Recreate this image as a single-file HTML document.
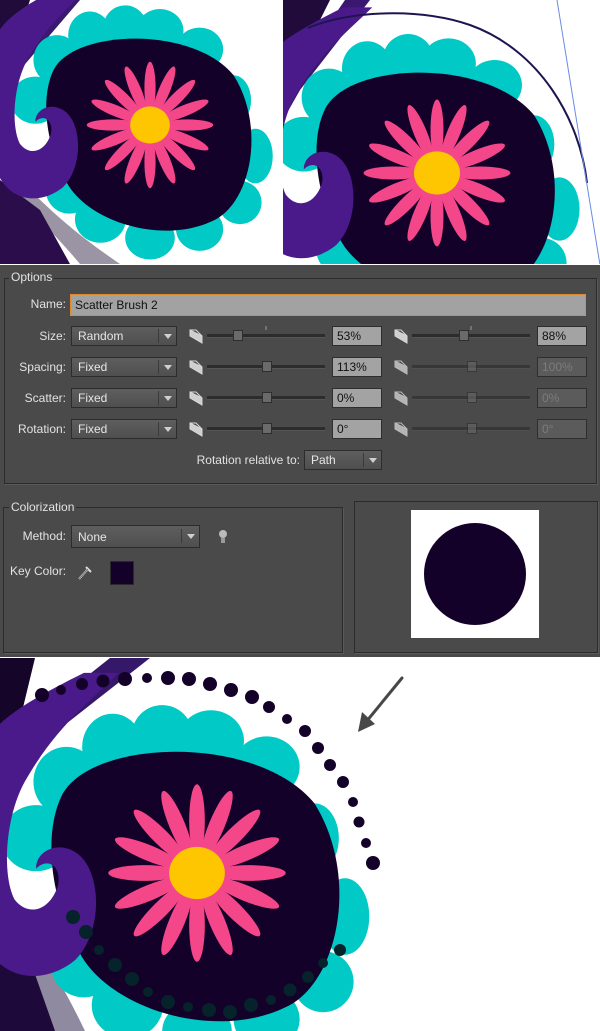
<!DOCTYPE html>
<html><head><meta charset="utf-8"><style>
body{margin:0;width:600px;height:1031px;overflow:hidden;background:#fff;font-family:"Liberation Sans",sans-serif;position:relative}
.a{position:absolute}
#panel{left:0;top:265px;width:600px;height:392px;background:#4a4a4a}
.lbl{position:absolute;color:#e2e2e2;font-size:12px;text-align:right;width:66px;left:0}
.dd{position:absolute;height:20px;background:linear-gradient(#5e5e5e,#4f4f4f);border:1px solid #2c2c2c;color:#e6e6e6;font-size:12px;line-height:19px;box-sizing:border-box;padding-left:6px}
.dd .ar{position:absolute;right:0;top:2px;width:17px;height:14px;border-left:1px solid #3a3a3a}
.dd .ar:after{content:"";position:absolute;left:5px;top:5px;border-left:4px solid transparent;border-right:4px solid transparent;border-top:5px solid #cfcfcf}
.box{position:absolute;height:20px;box-sizing:border-box;border:1px solid #2e2e2e;font-size:12px;line-height:19px;padding-left:4px;width:50px}
.on{background:#a3a3a3;color:#111}
.off{background:#5b5b5b;color:#7c7c7c}
.trk{position:absolute;height:3px;background:#2c2c2c;border-bottom:1px solid #555}
.th{position:absolute;width:8px;height:9px;background:#6a6a6a;border:1px solid #2e2e2e}
.fs{position:absolute;border:1px solid #2b2b2b;box-shadow:1px 1px 0 #5a5a5a}
.leg{position:absolute;background:#4a4a4a;color:#e2e2e2;font-size:12px;padding:0 2px}
</style></head><body>
<svg class="a" style="left:0;top:0" width="600" height="1031" viewBox="0 0 600 1031">
<defs>
<g id="fl">
<path d="M-1.55,-0.9 C-1.2,-1.55 0.7,-1.6 1.35,-0.8 C1.85,0 1.65,1.15 1.1,1.5 C0.3,1.95 -0.9,1.6 -1.3,1.0 C-1.65,0.45 -1.8,-0.4 -1.55,-0.9Z" fill="#14012a"/>
<g id="pt"><ellipse cx="0" cy="-0.6" rx="0.09" ry="0.42" fill="#f4478a"/></g>
<use href="#pt" transform="rotate(22.5)"/><use href="#pt" transform="rotate(45)"/><use href="#pt" transform="rotate(67.5)"/><use href="#pt" transform="rotate(90)"/><use href="#pt" transform="rotate(112.5)"/><use href="#pt" transform="rotate(135)"/><use href="#pt" transform="rotate(157.5)"/><use href="#pt" transform="rotate(180)"/><use href="#pt" transform="rotate(202.5)"/><use href="#pt" transform="rotate(225)"/><use href="#pt" transform="rotate(247.5)"/><use href="#pt" transform="rotate(270)"/><use href="#pt" transform="rotate(292.5)"/><use href="#pt" transform="rotate(315)"/><use href="#pt" transform="rotate(337.5)"/>
<ellipse cx="0" cy="0" rx="0.32" ry="0.3" fill="#fec600"/>
</g>
<g id="sc" fill="#00c9c6">
<ellipse cx="-1.5" cy="-1.05" rx="0.38" ry="0.4"/><ellipse cx="-0.97" cy="-1.45" rx="0.35" ry="0.38"/><ellipse cx="-0.4" cy="-1.58" rx="0.35" ry="0.35"/><ellipse cx="0.16" cy="-1.52" rx="0.38" ry="0.35"/><ellipse cx="0.8" cy="-1.22" rx="0.38" ry="0.35"/><ellipse cx="1.35" cy="-0.4" rx="0.28" ry="0.4"/>
<ellipse cx="1.7" cy="0.5" rx="0.28" ry="0.44"/><ellipse cx="1.45" cy="1.25" rx="0.35" ry="0.35"/><ellipse cx="0.8" cy="1.68" rx="0.38" ry="0.35"/><ellipse cx="0" cy="1.82" rx="0.4" ry="0.35"/><ellipse cx="-0.8" cy="1.52" rx="0.41" ry="0.38"/><ellipse cx="-1.3" cy="1.05" rx="0.38" ry="0.38"/><ellipse cx="-1.85" cy="-0.4" rx="0.4" ry="0.38"/>
</g>
<g id="sw">
<path d="M-2.45,-1.5 L-2.45,0.8 C-2.2,1.3 -1.7,1.25 -1.4,1.0 C-1.1,0.7 -1.1,0.1 -1.3,-0.15 C-1.5,-0.4 -1.85,-0.3 -1.85,-0.05 C-1.7,-0.2 -1.55,-0.05 -1.6,0.15 C-1.7,0.45 -1.95,0.5 -2.1,0.3 C-2.25,0 -2.2,-0.7 -1.95,-1.1 C-1.6,-1.7 -1.2,-2.0 -0.9,-2.3 L-1.3,-2.3 C-1.9,-2.0 -2.25,-1.8 -2.45,-1.5Z" fill="#4a1a8a"/>
</g>
<clipPath id="c1"><rect x="0" y="0" width="280" height="264"/></clipPath>
<clipPath id="c2"><rect x="283" y="0" width="317" height="264"/></clipPath>
<clipPath id="c3"><rect x="0" y="658" width="600" height="373"/></clipPath>
</defs>
<g clip-path="url(#c1)">
<rect width="280" height="264" fill="#fff"/>
<path d="M0,0 L30,0 L10,60 L0,90Z" fill="#200b3a"/>
<path d="M60,0 L80,0 L20,70 L0,100 L0,80Z" fill="#3a1870"/>
<path d="M30,190 C70,230 100,250 120,264 L80,264 C60,240 40,220 20,200Z" fill="#9a94a4"/>
<path d="M0,180 L40,210 L70,264 L0,264Z" fill="#2a0d4a"/>
<g transform="translate(150,125) scale(62)"><use href="#sc"/><use href="#fl"/><use href="#sw"/></g>
</g>
<rect x="280" y="0" width="3" height="265" fill="#fff"/>
<g clip-path="url(#c2)">
<rect x="283" width="317" height="264" fill="#fff"/>
<path d="M283,0 L330,0 L300,60 L283,100Z" fill="#200b3a"/>
<path d="M345,0 L370,0 L300,90 L283,120 L283,90Z" fill="#3a1870"/>
<g transform="translate(437,173) scale(72)"><use href="#sc"/><use href="#fl"/><use href="#sw"/></g>
<path d="M308,28 C350,10 420,8 470,25 C540,50 580,120 587,183" fill="none" stroke="#1d1550" stroke-width="2"/>
<path d="M557,0 L600,265" stroke="#6a8ae8" stroke-width="1"/>
</g>
<g clip-path="url(#c3)">
<rect x="0" y="658" width="600" height="373" fill="#fff"/>
<path d="M0,658 L35,658 L20,720 L0,750Z" fill="#150528"/>
<path d="M110,658 L150,658 L20,760 L0,775 L0,745Z" fill="#35186a"/>
<path d="M20,930 C50,960 70,1000 85,1031 L50,1031 C40,1000 20,970 0,950Z" fill="#908aa0"/>
<path d="M0,940 L30,960 L55,1031 L0,1031Z" fill="#1e0a3a"/>
<g transform="translate(197,873) scale(87)"><use href="#sc"/><use href="#fl"/><use href="#sw"/></g>
<g fill="#14012a">
<circle cx="42" cy="695" r="7"/><circle cx="61" cy="690" r="5"/><circle cx="82" cy="684" r="6"/><circle cx="103" cy="681" r="6.5"/><circle cx="125" cy="679" r="7"/><circle cx="147" cy="678" r="5"/><circle cx="168" cy="678" r="7"/><circle cx="189" cy="679" r="7"/><circle cx="210" cy="684" r="7"/><circle cx="231" cy="690" r="7"/><circle cx="252" cy="697" r="7"/><circle cx="269" cy="707" r="6"/><circle cx="287" cy="719" r="5"/><circle cx="305" cy="731" r="6"/><circle cx="318" cy="748" r="6"/><circle cx="330" cy="765" r="6"/><circle cx="343" cy="782" r="6"/><circle cx="353" cy="802" r="5"/><circle cx="359" cy="822" r="5.5"/><circle cx="366" cy="843" r="5"/><circle cx="373" cy="863" r="7"/>
</g>
<g fill="#06222a">
<circle cx="73" cy="917" r="7"/><circle cx="86" cy="932" r="7"/><circle cx="99" cy="950" r="5"/><circle cx="115" cy="965" r="7"/><circle cx="132" cy="979" r="7"/><circle cx="148" cy="992" r="5"/><circle cx="168" cy="1002" r="7"/><circle cx="188" cy="1007" r="5"/><circle cx="209" cy="1010" r="7"/><circle cx="230" cy="1012" r="7"/><circle cx="251" cy="1005" r="7"/><circle cx="271" cy="1000" r="5"/><circle cx="290" cy="990" r="6.5"/><circle cx="308" cy="977" r="6"/><circle cx="323" cy="963" r="5"/><circle cx="340" cy="950" r="6"/>
</g>
<path d="M402,678 L366,722" stroke="#474747" stroke-width="3" stroke-linecap="round"/>
<path d="M358,732 L362,712 L375,724Z" fill="#474747"/>
</g>
</svg>

<div class="a" id="panel"></div>
<div class="fs" style="left:4px;top:278px;width:591px;height:204px"></div>
<div class="leg" style="left:9px;top:270px">Options</div>

<div class="lbl" style="top:297px">Name:</div>
<div class="a" style="left:70px;top:294px;width:516px;height:22px;box-sizing:border-box;border:1px solid #e08a30;background:#a2a2a2;color:#111;font-size:12px;line-height:20px;padding-left:4px">Scatter Brush 2</div>

<div class="lbl" style="top:329px">Size:</div>
<div class="dd" style="left:71px;top:326px;width:106px">Random<span class="ar"></span></div>
<div class="lbl" style="top:360px">Spacing:</div>
<div class="dd" style="left:71px;top:357px;width:106px">Fixed<span class="ar"></span></div>
<div class="lbl" style="top:391px">Scatter:</div>
<div class="dd" style="left:71px;top:388px;width:106px">Fixed<span class="ar"></span></div>
<div class="lbl" style="top:422px">Rotation:</div>
<div class="dd" style="left:71px;top:419px;width:106px">Fixed<span class="ar"></span></div>

<svg class="a" style="left:0;top:0" width="600" height="480">
<g id="ic" fill="none" stroke="#d8d8d8" stroke-width="1"><path d="M190,330 L190,336 L202,343 L202,336Z" fill="#cfcfcf"/><path d="M190,330 L196,330 L202,336"/></g>
<use href="#ic" transform="translate(0,31)"/><use href="#ic" transform="translate(0,62)"/><use href="#ic" transform="translate(0,93)"/>
<use href="#ic" transform="translate(205,0)"/><use href="#ic" transform="translate(205,31)" opacity=".8"/><use href="#ic" transform="translate(205,62)" opacity=".8"/><use href="#ic" transform="translate(205,93)" opacity=".8"/>
<line x1="266" y1="326" x2="266" y2="330" stroke="#999"/><line x1="471" y1="326" x2="471" y2="330" stroke="#999"/>
</svg>

<div class="trk" style="left:207px;top:334px;width:118px"></div><div class="th" style="left:233px;top:330px"></div>
<div class="trk" style="left:207px;top:365px;width:118px"></div><div class="th" style="left:262px;top:361px"></div>
<div class="trk" style="left:207px;top:396px;width:118px"></div><div class="th" style="left:262px;top:392px"></div>
<div class="trk" style="left:207px;top:427px;width:118px"></div><div class="th" style="left:262px;top:423px"></div>
<div class="trk" style="left:412px;top:334px;width:118px"></div><div class="th" style="left:459px;top:330px"></div>
<div class="trk" style="left:412px;top:365px;width:118px;opacity:.6"></div><div class="th" style="left:467px;top:361px;opacity:.6"></div>
<div class="trk" style="left:412px;top:396px;width:118px;opacity:.6"></div><div class="th" style="left:467px;top:392px;opacity:.6"></div>
<div class="trk" style="left:412px;top:427px;width:118px;opacity:.6"></div><div class="th" style="left:467px;top:423px;opacity:.6"></div>

<div class="box on" style="left:332px;top:326px">53%</div>
<div class="box on" style="left:332px;top:357px">113%</div>
<div class="box on" style="left:332px;top:388px">0%</div>
<div class="box on" style="left:332px;top:419px">0°</div>
<div class="box on" style="left:537px;top:326px">88%</div>
<div class="box off" style="left:537px;top:357px">100%</div>
<div class="box off" style="left:537px;top:388px">0%</div>
<div class="box off" style="left:537px;top:419px">0°</div>

<div class="a" style="left:190px;top:453px;width:110px;text-align:right;color:#e2e2e2;font-size:12px">Rotation relative to:</div>
<div class="dd" style="left:304px;top:450px;width:78px">Path<span class="ar"></span></div>

<div class="fs" style="left:3px;top:507px;width:338px;height:144px"></div>
<div class="leg" style="left:9px;top:500px">Colorization</div>
<div class="lbl" style="top:529px">Method:</div>
<div class="dd" style="left:71px;top:525px;width:129px;height:23px;line-height:22px">None<span class="ar" style="top:3px"></span></div>
<svg class="a" style="left:217px;top:529px" width="12" height="16"><circle cx="6" cy="5" r="4" fill="#bbb"/><rect x="4" y="9" width="4" height="5" fill="#999"/></svg>
<div class="a" style="left:10px;top:564px;color:#e2e2e2;font-size:12px">Key Color:</div>
<svg class="a" style="left:76px;top:563px" width="18" height="18"><path d="M3,16 L12,6 M10,4 L15,9" stroke="#ddd" stroke-width="2" fill="none"/><path d="M3,16 L12,6" stroke="#555" stroke-width="0.8"/></svg>
<div class="a" style="left:110px;top:561px;width:24px;height:24px;box-sizing:border-box;border:1px solid #2a2a2a;background:#14012a"></div>

<div class="fs" style="left:354px;top:501px;width:242px;height:150px"></div>
<div class="a" style="left:411px;top:510px;width:128px;height:128px;background:#fff"></div>
<div class="a" style="left:424px;top:523px;width:102px;height:102px;border-radius:50%;background:#14012a"></div>
</body></html>
